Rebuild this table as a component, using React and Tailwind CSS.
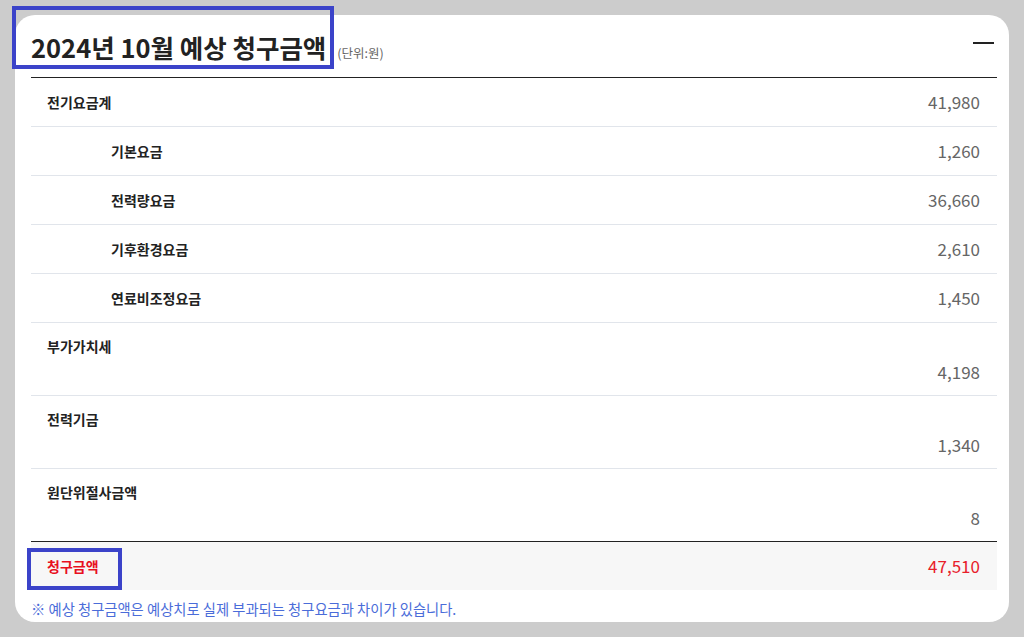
import React from "react";

const font = { fontFamily: '"Noto Sans CJK KR", "Noto Sans", sans-serif' };

function Row({ label, value, indent }) {
  return (
    <div className="flex h-[49px] items-center justify-between border-b border-[#e1e5eb] pr-[17px]">
      <span className={`text-[14px] font-bold text-[#222] ${indent ? "pl-[80px]" : "pl-[16px]"}`}>{label}</span>
      <span className="text-[17px] text-[#666]">{value}</span>
    </div>
  );
}

function TallRow({ label, value, last }) {
  return (
    <div className={`flex h-[73px] flex-col justify-between py-[12px] pr-[17px] ${last ? "border-b border-[#222]" : "border-b border-[#e1e5eb]"}`}>
      <span className="pl-[16px] text-[14px] font-bold leading-[22px] text-[#222]">{label}</span>
      <span className="self-end text-[17px] leading-[22px] text-[#666]">{value}</span>
    </div>
  );
}

export default function App() {
  return (
    <div className="h-[637px] w-[1024px] bg-[#cccccc] p-[15px]" style={font}>
      <div className="relative h-[607px] w-[994px] rounded-[20px] bg-white pl-[16px] pr-[12px]">
        <div className="absolute left-[-3px] top-[-9px] h-[63px] w-[322px] border-[4px] border-[#3b43c9]" />
        <div className="flex h-[63px] items-center justify-between border-b border-[#222]">
          <div className="flex items-end gap-[11px] pt-[2px]">
            <span className="text-[25.5px] font-bold leading-none text-[#222]">2024년 10월 예상 청구금액</span>
            <span className="text-[12.5px] leading-none text-[#666]">(단위:원)</span>
          </div>
          <div className="mr-[3px] mb-[6px] h-[2px] w-[21px] bg-[#222]" />
        </div>
        <Row label="전기요금계" value="41,980" />
        <Row label="기본요금" value="1,260" indent />
        <Row label="전력량요금" value="36,660" indent />
        <Row label="기후환경요금" value="2,610" indent />
        <Row label="연료비조정요금" value="1,450" indent />
        <TallRow label="부가가치세" value="4,198" />
        <TallRow label="전력기금" value="1,340" />
        <TallRow label="원단위절사금액" value="8" last />
        <div className="relative flex h-[48px] items-center justify-between bg-[#f7f7f7] pr-[17px]">
          <div className="absolute left-[-4px] top-[6px] h-[42px] w-[95px] border-[4px] border-[#3b43c9]" />
          <span className="pl-[16px] text-[14px] font-bold text-[#e8101e]">청구금액</span>
          <span className="text-[17px] text-[#e8202a]">47,510</span>
        </div>
        <div className="pt-[8px] text-[14.3px] text-[#4a6cd9]">※ 예상 청구금액은 예상치로 실제 부과되는 청구요금과 차이가 있습니다.</div>
      </div>
    </div>
  );
}
